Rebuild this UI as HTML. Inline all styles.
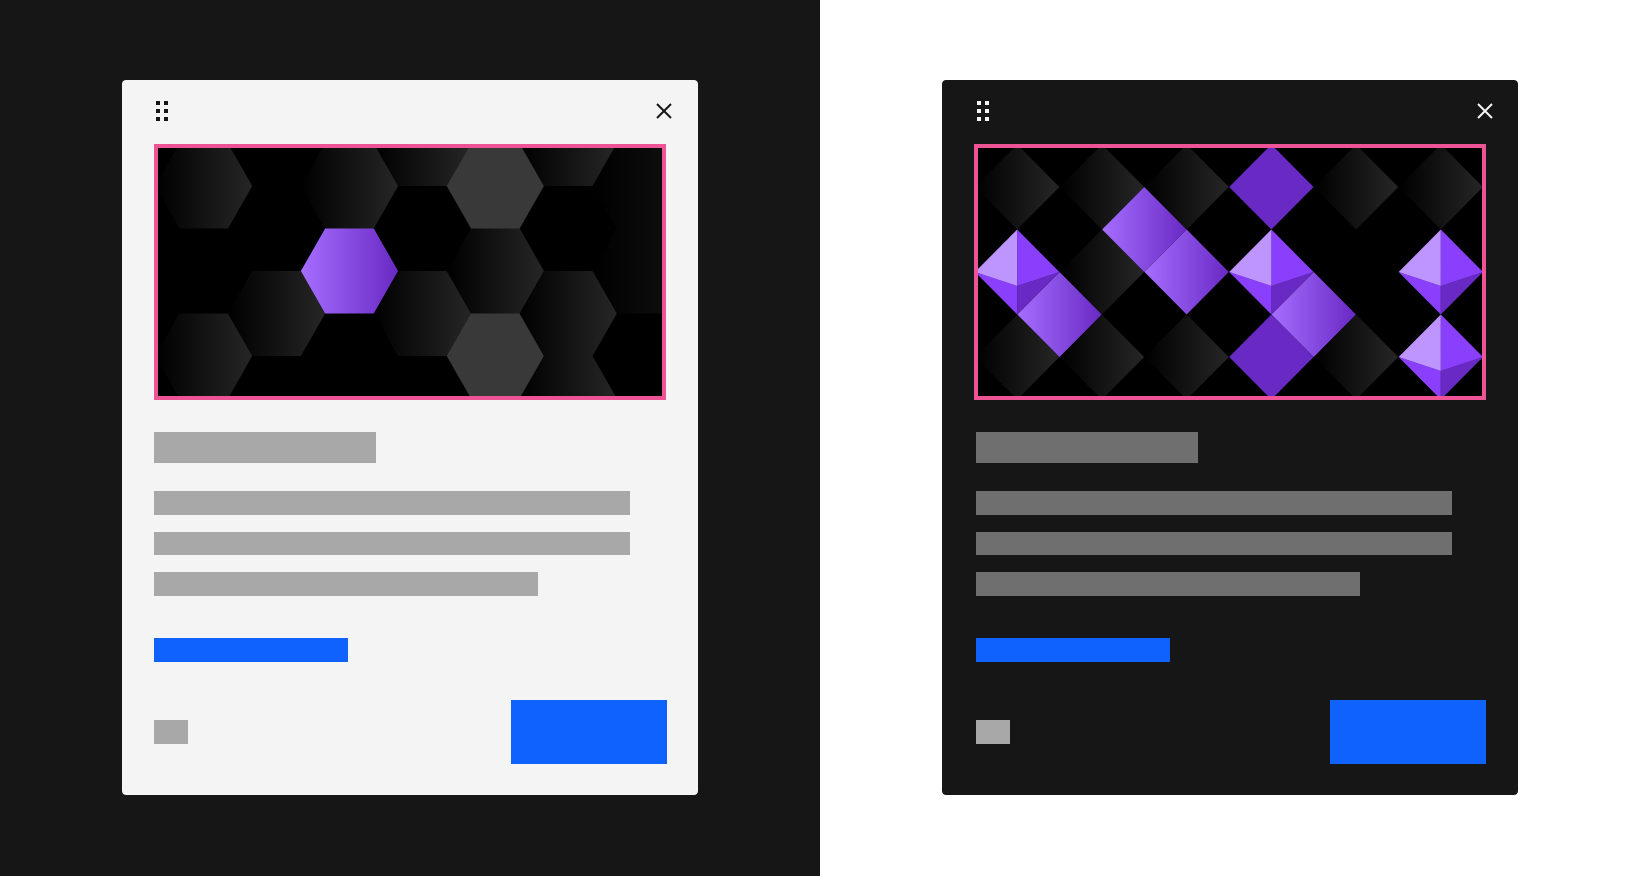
<!DOCTYPE html>
<html><head><meta charset="utf-8"><style>
*{margin:0;padding:0;box-sizing:border-box}
body{width:1640px;height:876px;position:relative;overflow:hidden;background:#fff;font-family:"Liberation Sans",sans-serif}
.half{position:absolute;top:0;height:876px}
.card{position:absolute;top:80px;width:576px;height:715px;border-radius:4px}
.a{position:absolute}
.pink{position:absolute;top:64px;width:512px;height:256px;border:4px solid #ee5396;background:#000;overflow:hidden}
.pink svg{display:block}
</style></head><body>
<div class="half" style="left:0;width:820px;background:#161616"></div>
<div class="half" style="left:820px;width:820px;background:#fff"></div>

<!-- left card -->
<div class="card" style="left:122px;background:#f4f4f4">
  <svg class="a" style="left:34px;top:21px" width="12" height="20"><g fill="#161616"><rect x="0" y="0" width="4" height="4"/><rect x="8" y="0" width="4" height="4"/><rect x="0" y="8" width="4" height="4"/><rect x="8" y="8" width="4" height="4"/><rect x="0" y="16" width="4" height="4"/><rect x="8" y="16" width="4" height="4"/></g></svg>
  <svg class="a" style="left:534px;top:23px" width="16" height="16"><path d="M1 1L15 15M15 1L1 15" stroke="#161616" stroke-width="2"/></svg>
  <div class="pink" style="left:32px">
    <svg width="504" height="248" viewBox="158 149 508 248" preserveAspectRatio="none">
      <defs>
        <linearGradient id="dg" x1="0" x2="1"><stop offset="0" stop-color="#000"/><stop offset="1" stop-color="#262626"/></linearGradient>
        <linearGradient id="dg2" x1="0" x2="1"><stop offset="0" stop-color="#000"/><stop offset="1" stop-color="#121212"/></linearGradient>
        <linearGradient id="pg" x1="0" x2="1"><stop offset="0" stop-color="#a56eff"/><stop offset="1" stop-color="#6929c4"/></linearGradient>
      </defs>
      <g>
        <polygon fill="url(#dg)" points="155,187 179.5,144.5 228.5,144.5 253,187 228.5,229.5 179.5,229.5"/>
        <polygon fill="url(#dg)" points="155,357 179.5,314.5 228.5,314.5 253,357 228.5,399.5 179.5,399.5"/>
        <polygon fill="url(#dg)" points="228.5,314.5 253,272 302,272 326.5,314.5 302,357 253,357"/>
        <polygon fill="url(#dg)" points="302,187 326.5,144.5 375.5,144.5 400,187 375.5,229.5 326.5,229.5"/>
        <polygon fill="url(#pg)" points="302,272 326.5,229.5 375.5,229.5 400,272 375.5,314.5 326.5,314.5"/>
        <polygon fill="url(#dg)" points="375.5,144.5 400,102 449,102 473.5,144.5 449,187 400,187"/>
        <polygon fill="url(#dg)" points="375.5,314.5 400,272 449,272 473.5,314.5 449,357 400,357"/>
        <polygon fill="#393939" points="449,187 473.5,144.5 522.5,144.5 547,187 522.5,229.5 473.5,229.5"/>
        <polygon fill="url(#dg)" points="449,272 473.5,229.5 522.5,229.5 547,272 522.5,314.5 473.5,314.5"/>
        <polygon fill="#393939" points="449,357 473.5,314.5 522.5,314.5 547,357 522.5,399.5 473.5,399.5"/>
        <polygon fill="url(#dg)" points="522.5,144.5 547,102 596,102 620.5,144.5 596,187 547,187"/>
        <polygon fill="url(#dg)" points="522.5,314.5 547,272 596,272 620.5,314.5 596,357 547,357"/>
        <polygon fill="url(#dg)" points="522.5,399.5 547,357 596,357 620.5,399.5 596,442 547,442"/>
        <polygon fill="url(#dg2)" points="596,187 620.5,144.5 669.5,144.5 694,187 669.5,229.5 620.5,229.5"/>
        <polygon fill="url(#dg2)" points="596,272 620.5,229.5 669.5,229.5 694,272 669.5,314.5 620.5,314.5"/>
      </g>
    </svg>
  </div>
  <div class="a" style="left:32px;top:352px;width:222px;height:31px;background:#a8a8a8"></div>
  <div class="a" style="left:32px;top:411px;width:476px;height:24px;background:#a8a8a8"></div>
  <div class="a" style="left:32px;top:452px;width:476px;height:23px;background:#a8a8a8"></div>
  <div class="a" style="left:32px;top:492px;width:384px;height:24px;background:#a8a8a8"></div>
  <div class="a" style="left:32px;top:558px;width:194px;height:24px;background:#0f62fe"></div>
  <div class="a" style="left:32px;top:640px;width:34px;height:24px;background:#a8a8a8"></div>
  <div class="a" style="left:389px;top:620px;width:156px;height:64px;background:#0f62fe"></div>
</div>

<!-- right card -->
<div class="card" style="left:942px;background:#161616">
  <svg class="a" style="left:35px;top:21px" width="12" height="20"><g fill="#f4f4f4"><rect x="0" y="0" width="4" height="4"/><rect x="8" y="0" width="4" height="4"/><rect x="0" y="8" width="4" height="4"/><rect x="8" y="8" width="4" height="4"/><rect x="0" y="16" width="4" height="4"/><rect x="8" y="16" width="4" height="4"/></g></svg>
  <svg class="a" style="left:535px;top:23px" width="16" height="16"><path d="M1 1L15 15M15 1L1 15" stroke="#f4f4f4" stroke-width="2"/></svg>
  <div class="pink" style="left:32px">
    <svg width="504" height="248" viewBox="0 0 508 248" preserveAspectRatio="none">
      <defs>
        <linearGradient id="dg3" x1="0" x2="1"><stop offset="0" stop-color="#000"/><stop offset="1" stop-color="#262626"/></linearGradient>
        <linearGradient id="pg3" x1="0" x2="1"><stop offset="0" stop-color="#a56eff"/><stop offset="1" stop-color="#6929c4"/></linearGradient>
      </defs>
      <g>
        <polygon fill="url(#dg3)" points="-3,39 39.5,-3.5 82,39 39.5,81.5"/>
        <polygon fill="url(#dg3)" points="82.4,39 124.9,-3.5 167.4,39 124.9,81.5"/>
        <polygon fill="url(#dg3)" points="167.8,39 210.3,-3.5 252.8,39 210.3,81.5"/>
        <polygon fill="url(#dg3)" points="338.6,39 381.1,-3.5 423.6,39 381.1,81.5"/>
        <polygon fill="url(#dg3)" points="424,39 466.5,-3.5 509,39 466.5,81.5"/>
        <polygon fill="url(#dg3)" points="82.4,124 124.9,81.5 167.4,124 124.9,166.5"/>
        <polygon fill="url(#dg3)" points="-3,209 39.5,166.5 82,209 39.5,251.5"/>
        <polygon fill="url(#dg3)" points="82.4,209 124.9,166.5 167.4,209 124.9,251.5"/>
        <polygon fill="url(#dg3)" points="167.8,209 210.3,166.5 252.8,209 210.3,251.5"/>
        <polygon fill="url(#dg3)" points="338.6,209 381.1,166.5 423.6,209 381.1,251.5"/>
        <polygon fill="#6929c4" points="253.2,39 295.7,-3.5 338.2,39 295.7,81.5"/>
        <polygon fill="#6929c4" points="253.2,209 295.7,166.5 338.2,209 295.7,251.5"/>
        <polygon fill="url(#pg3)" points="125.1,81.5 167.6,39 210.1,81.5 167.6,124"/>
        <polygon fill="url(#pg3)" points="167.8,124 210.3,81.5 252.8,124 210.3,166.5"/>
        <polygon fill="url(#pg3)" points="39.7,166.5 82.2,124 124.7,166.5 82.2,209"/>
        <polygon fill="url(#pg3)" points="295.9,166.5 338.4,124 380.9,166.5 338.4,209"/>
        <g id="oct1">
          <polygon fill="#be95ff" points="-3,124 39.5,81.5 39.5,138"/>
          <polygon fill="#8a3ffc" points="39.5,81.5 82,124 39.5,138"/>
          <polygon fill="#8a3ffc" points="-3,124 39.5,138 39.5,166.5"/>
          <polygon fill="#6929c4" points="39.5,138 82,124 39.5,166.5"/>
        </g>
        <use href="#oct1" x="256.2"/>
        <use href="#oct1" x="427"/>
        <use href="#oct1" x="427" y="85"/>
      </g>
    </svg>
  </div>
  <div class="a" style="left:34px;top:352px;width:222px;height:31px;background:#6f6f6f"></div>
  <div class="a" style="left:34px;top:411px;width:476px;height:24px;background:#6f6f6f"></div>
  <div class="a" style="left:34px;top:452px;width:476px;height:23px;background:#6f6f6f"></div>
  <div class="a" style="left:34px;top:492px;width:384px;height:24px;background:#6f6f6f"></div>
  <div class="a" style="left:34px;top:558px;width:194px;height:24px;background:#0f62fe"></div>
  <div class="a" style="left:34px;top:640px;width:34px;height:24px;background:#a8a8a8"></div>
  <div class="a" style="left:388px;top:620px;width:156px;height:64px;background:#0f62fe"></div>
</div>
</body></html>
